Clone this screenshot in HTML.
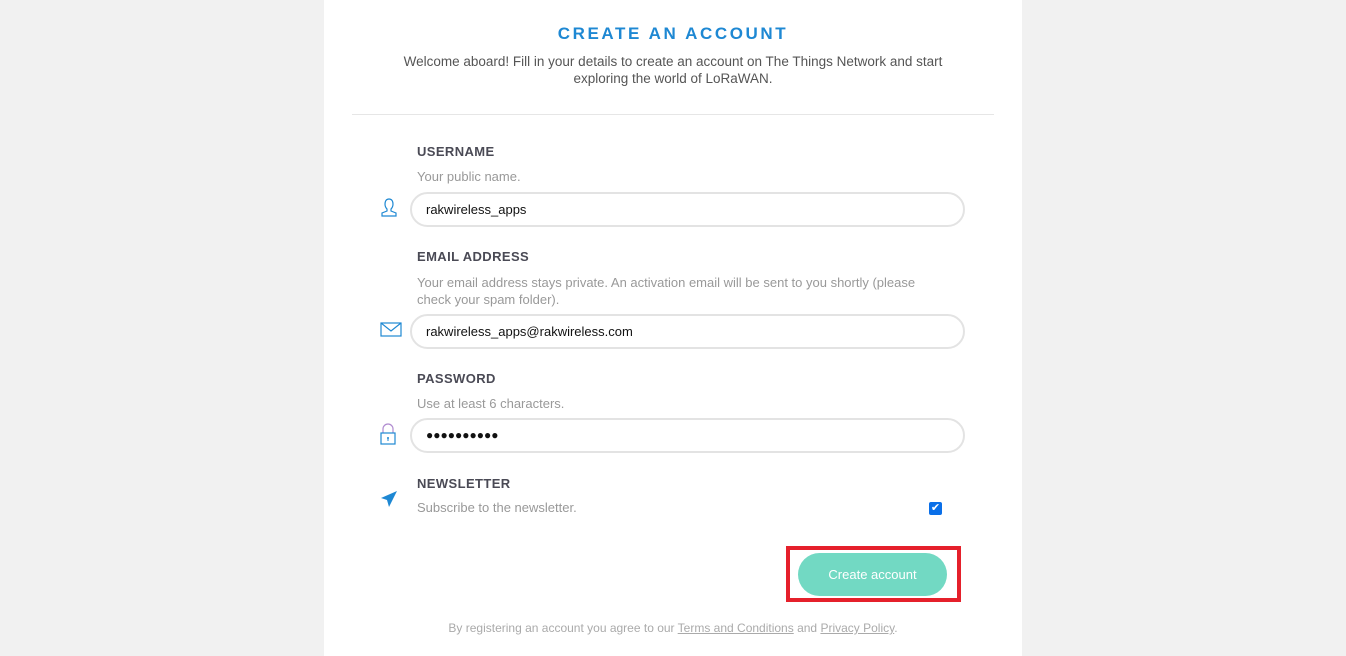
<!DOCTYPE html>
<html><head><style>
body{margin:0;background:#f1f1f1;font-family:"Liberation Sans",sans-serif;width:1346px;height:656px;overflow:hidden;position:relative}
.card{position:absolute;left:324px;top:0;width:698px;height:656px;background:#fff}
.a{position:absolute;white-space:nowrap}
h1{position:absolute;left:0;width:698px;top:24px;margin:0;text-align:center;font-size:17px;letter-spacing:2.6px;color:#1e88d3;font-weight:bold}
.lbl{font-size:13px;font-weight:bold;color:#4a4a55;letter-spacing:.4px}
.hint{font-size:13px;color:#999}
.inp{position:absolute;left:86px;height:31px;border:2px solid #e3e3e3;border-radius:18px;font-size:13px;color:#111;line-height:31px;padding-left:14px;box-sizing:content-box;width:537px}
</style></head><body>
<div class="card">
<h1>CREATE AN ACCOUNT</h1>
<div class="a" style="left:0;width:698px;top:53px;text-align:center;font-size:13.5px;color:#555;line-height:17px;white-space:normal">Welcome aboard! Fill in your details to create an account on The Things Network and start<br>exploring the world of LoRaWAN.</div>
<div class="a" style="left:28px;top:114px;width:642px;height:1px;background:#e6e6e6"></div>

<div class="a lbl" style="left:93px;top:144px">USERNAME</div>
<div class="a hint" style="left:93px;top:169px">Your public name.</div>
<svg class="a" style="left:56px;top:198px" width="18" height="20" viewBox="0 0 18 20"><path d="M9 1c-3 0-4 2.5-4 5s1 4 2 5v2l-5 2v3h14v-3l-5-2v-2c1-1 2-2.5 2-5s-1-5-4-5z" fill="none" stroke="#1e88d3" stroke-width="1.2"/></svg>
<div class="inp" style="top:192px">rakwireless_apps</div>

<div class="a lbl" style="left:93px;top:249px">EMAIL ADDRESS</div>
<div class="a hint" style="left:93px;top:274px;line-height:17px">Your email address stays private. An activation email will be sent to you shortly (please<br>check your spam folder).</div>
<svg class="a" style="left:56px;top:322px" width="22" height="15" viewBox="0 0 22 15"><rect x="1" y="1" width="20" height="13" fill="none" stroke="#1e88d3" stroke-width="1.2"/><path d="M1 1l10 8 10-8" fill="none" stroke="#1e88d3" stroke-width="1.2"/></svg>
<div class="inp" style="top:314px">rakwireless_apps@rakwireless.com</div>

<div class="a lbl" style="left:93px;top:371px">PASSWORD</div>
<div class="a hint" style="left:93px;top:396px">Use at least 6 characters.</div>
<svg class="a" style="left:56px;top:423px" width="16" height="22" viewBox="0 0 16 22"><path d="M3 10V6a5 5 0 0 1 10 0v4" fill="none" stroke="#b08bd0" stroke-width="1.2"/><rect x="1" y="10" width="14" height="11" fill="none" stroke="#1e88d3" stroke-width="1.2"/><circle cx="8" cy="15" r="1" fill="#1e88d3"/><path d="M8 15v3" stroke="#1e88d3"/></svg>
<div class="inp" style="top:418px;font-size:12px;letter-spacing:0px">●●●●●●●●●●</div>

<div class="a lbl" style="left:93px;top:476px">NEWSLETTER</div>
<div class="a hint" style="left:93px;top:500px">Subscribe to the newsletter.</div>
<svg class="a" style="left:56px;top:490px" width="18" height="18" viewBox="0 0 18 18"><path d="M17 1L1 8l6 2 2 7z" fill="#1e88d3"/></svg>
<div class="a" style="left:605px;top:502px;width:13px;height:13px;background:#0a6fe8;border-radius:2px;color:#fff;font-size:11px;line-height:13px;text-align:center">✔</div>

<div class="a" style="left:462px;top:546px;width:167px;height:48px;border:4px solid #e5202b"></div>
<div class="a" style="left:474px;top:553px;width:149px;height:43px;border-radius:22px;background:#72d9c3;color:#fff;font-size:13px;text-align:center;line-height:43px">Create account</div>

<div class="a" style="left:0;width:698px;top:621px;text-align:center;font-size:12px;color:#aaa">By registering an account you agree to our <u>Terms and Conditions</u> and <u>Privacy Policy</u>.</div>
</div>
</body></html>
